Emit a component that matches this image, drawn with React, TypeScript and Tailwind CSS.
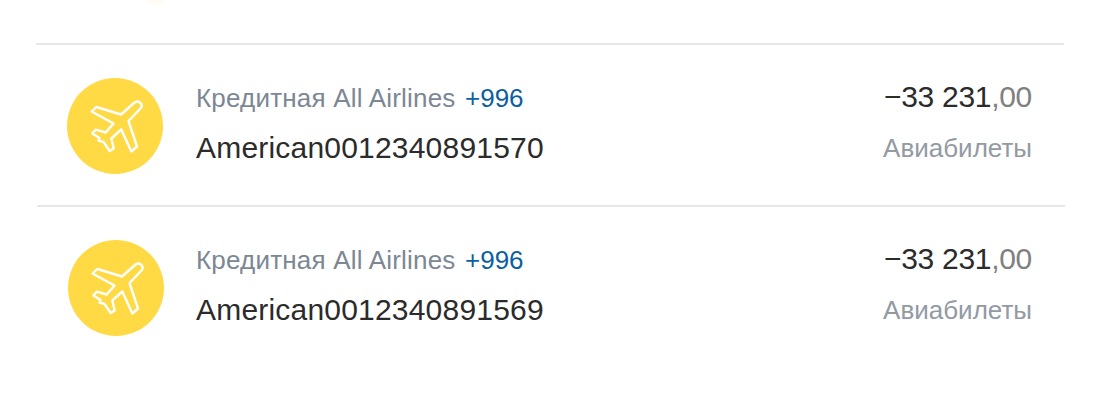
import React from "react";

function PlaneIcon() {
  return (
    <svg viewBox="0 0 96 96" className="w-24 h-24" fill="none">
      <path
        d="M67 25 54 36.5 29.3 29 24.6 33.5 46.5 45.5 38.7 54.5 28.7 51.7 25.3 55.5 32.5 60 31.5 62.5 36.5 64 42.7 73 46.7 70.5 44.3 60.5 54.3 51.5 64.3 73.5 70 68.5 61.5 43 73.5 30.5C77 26 71 21.5 67 25Z"
        stroke="white"
        strokeWidth="2.4"
        strokeLinejoin="round"
      />
    </svg>
  );
}

function Row({ card, shifted }: { card: string; shifted?: boolean }) {
  return (
    <div
      className={
        shifted
          ? "flex items-start border-t-2 border-[#e6e7e7] h-[162px] pt-[33px] pl-[31px] pr-[33px] ml-px -mr-px font-['Liberation_Sans',sans-serif]"
          : "flex items-start border-t-2 border-[#e6e7e7] h-[162px] pt-[33px] pl-[31px] pr-[32px] font-['Liberation_Sans',sans-serif]"
      }
    >
      <div className="w-24 h-24 rounded-full bg-[#ffda44] shrink-0">
        <PlaneIcon />
      </div>
      <div className={shifted ? "ml-[32px] flex-1" : "ml-[33px] flex-1"}>
        <div className="text-[26px] leading-[40px] tracking-[0.2px] text-[#7c8794]">
          Кредитная All Airlines <span className="ml-[2px] tracking-normal text-[#0b5f9f]">+996</span>
        </div>
        <div className="mt-[10px] text-[30px] leading-[40px] tracking-[0.2px] text-[#2b2b2b]">{card}</div>
      </div>
      <div className="text-right -mt-px">
        <div className="text-[30px] leading-[40px] tracking-[-0.3px] text-[#2b2b2b]">
          −33 231<span className="text-[#808080]">,00</span>
        </div>
        <div className="mt-[11px] text-[26px] leading-[40px] text-[#929aa3]">Авиабилеты</div>
      </div>
    </div>
  );
}

export default function App() {
  return (
    <div className="relative w-[1104px] h-[402px] bg-white pt-[43px] pl-[36px] pr-[40px] overflow-hidden">
      {/* bottom edge of the row above, cut off by the frame */}
      <div className="absolute left-[143px] top-[-20px] w-[24px] h-[25px] rounded-full bg-[#fffbf5]" />
      <Row card="American0012340891570" />
      <Row card="American0012340891569" shifted />
    </div>
  );
}
